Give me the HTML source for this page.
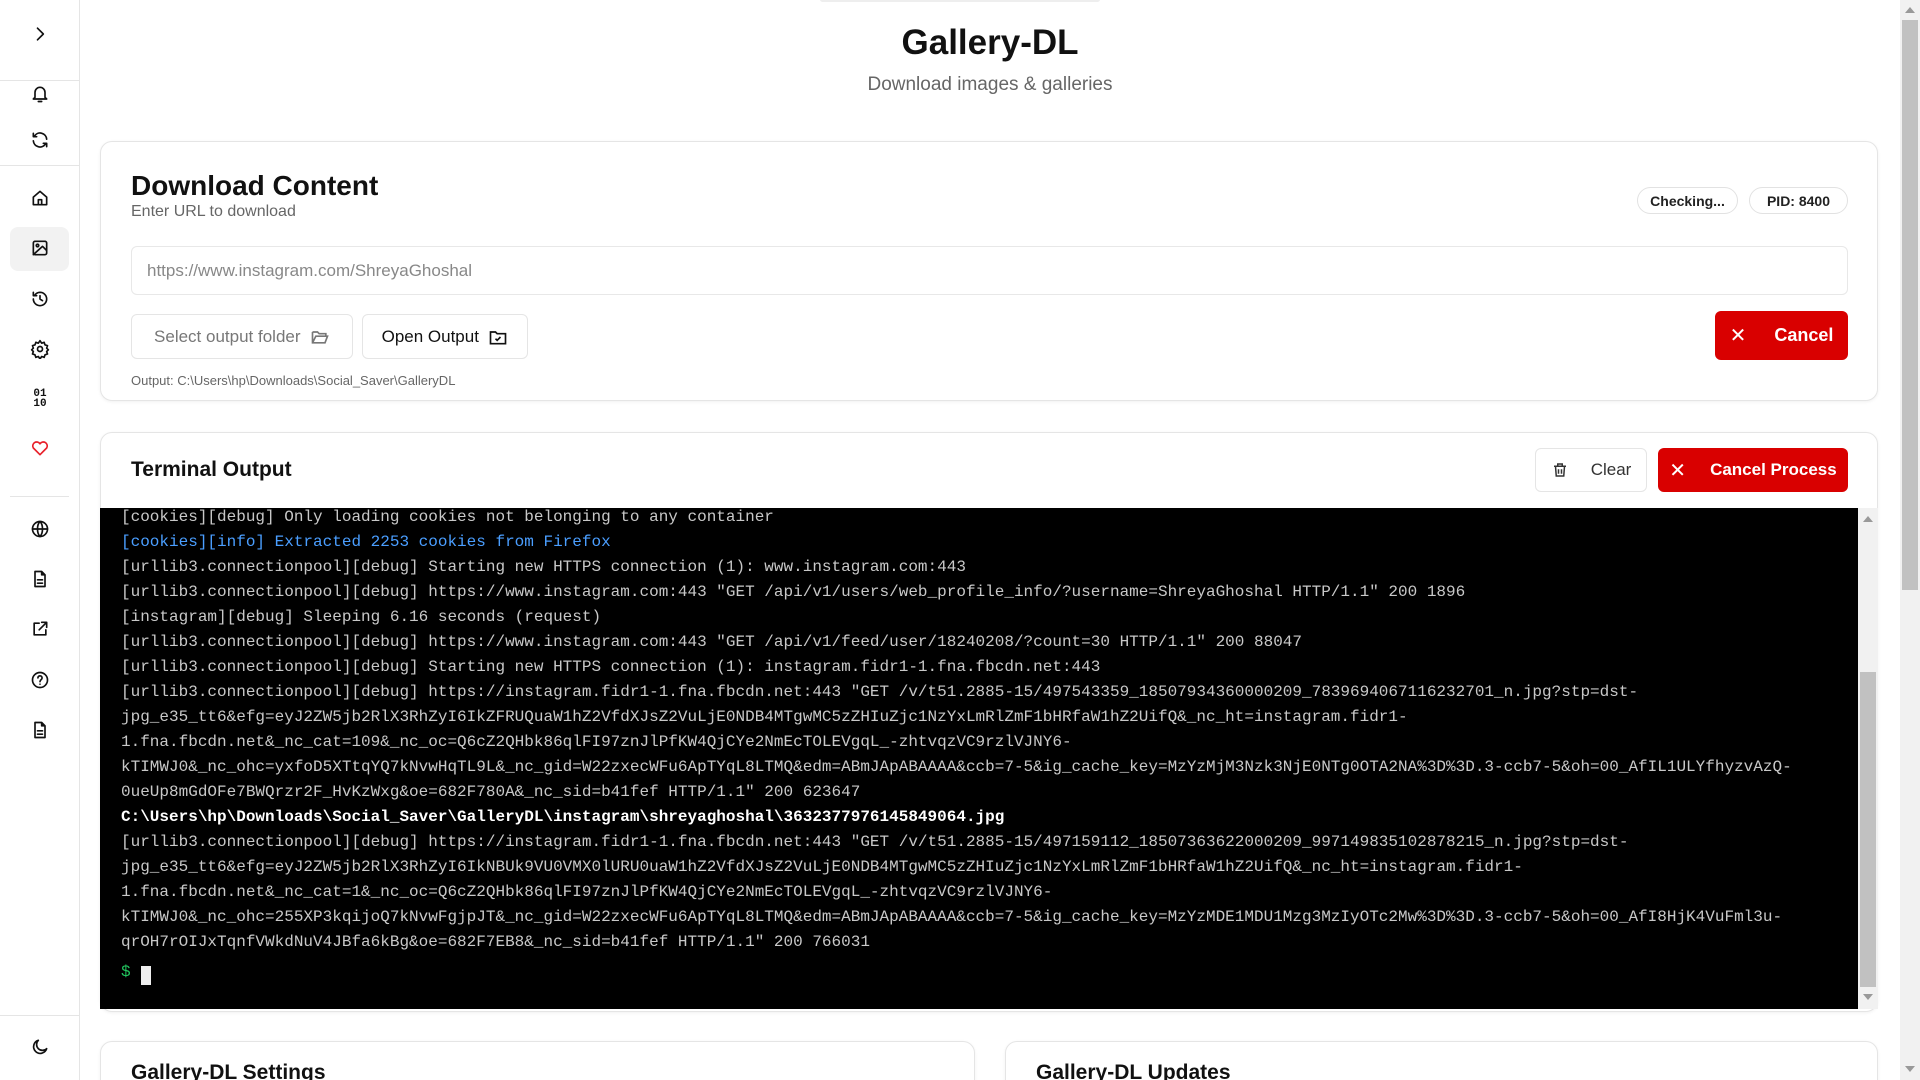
<!DOCTYPE html>
<html><head><meta charset="utf-8">
<style>
*{box-sizing:border-box;margin:0;padding:0}
html{width:1920px;height:1080px;overflow:hidden}
body{width:1920px;height:1080px;overflow:hidden;background:#fff;font-family:"Liberation Sans",sans-serif;color:#111;position:relative}
.a{position:absolute}
.side{left:0;top:0;width:80px;height:1080px;border-right:1px solid #e5e5e5;background:#fff}
.hr{position:absolute;left:0;width:80px;height:1px;background:#e5e5e5}
.ic{position:absolute;left:30px;width:20px;height:20px}
.ic svg{width:20px;height:20px;fill:none;stroke:#111;stroke-width:2;stroke-linecap:round;stroke-linejoin:round}
.card{border:1px solid #e5e5e5;border-radius:12px;background:#fff;box-shadow:0 1px 3px rgba(0,0,0,.06)}
.badge{border:1px solid #e2e2e2;border-radius:14px;height:27px;font-size:14px;font-weight:bold;display:flex;align-items:center;justify-content:center;color:#222}
.btn{border:1px solid #e5e5e5;border-radius:6px;display:flex;align-items:center;justify-content:center;font-size:17px}
.red{background:#d90000;color:#fff;border:none;font-weight:bold}
.term{left:100px;top:508px;width:1758px;height:501px;background:#000;font-family:"Liberation Mono",monospace;font-size:16px;line-height:25px;color:#c8c8c8;padding:0 0 0 21px;overflow:hidden;white-space:pre}
.b{color:#4a9eff}.w{color:#fff;font-weight:bold}
</style></head><body>
<div class="a side">
 <div class="ic" style="top:24px"><svg viewBox="0 0 24 24"><path d="M9 5l7 7-7 7"/></svg></div>
 <div class="hr" style="top:80px"></div>
 <div class="ic" style="top:84px"><svg viewBox="0 0 24 24"><path d="M6 16V10a6 6 0 0112 0v6l2 2H4zM10 21h4"/></svg></div>
 <div class="ic" style="top:130px"><svg viewBox="0 0 24 24"><path d="M20 11a8 8 0 00-14.5-4M4 4v4h4M4 13a8 8 0 0014.5 4M20 20v-4h-4"/></svg></div>
 <div class="hr" style="top:165px"></div>
 <div class="ic" style="top:188px"><svg viewBox="0 0 24 24"><path d="M4 11l8-7 8 7v9H4zM10 20v-6h4v6"/></svg></div>
 <div class="a" style="left:10px;top:227px;width:59px;height:44px;background:#f2f2f2;border-radius:8px"></div>
 <div class="ic" style="top:238px"><svg viewBox="0 0 24 24"><rect x="4" y="4" width="16" height="16" rx="2"/><circle cx="9" cy="9" r="1.5"/><path d="M20 15l-5-5-11 10"/></svg></div>
 <div class="ic" style="top:289px"><svg viewBox="0 0 24 24"><path d="M4 12a8 8 0 108-8 8 8 0 00-6 3M4 4v4h4M12 8v4l3 2"/></svg></div>
 <div class="ic" style="top:339px"><svg viewBox="0 0 24 24"><circle cx="12" cy="12" r="3"/><path d="M12 2l2 3 3-1 1 3 3 1-1 3 2 2-2 2 1 3-3 1-1 3-3-1-2 3-2-3-3 1-1-3-3-1 1-3-2-2 2-2-1-3 3-1 1-3 3 1z"/></svg></div>
 <div class="a" style="left:30px;top:389px;width:20px;font:bold 11px/10px 'Liberation Mono',monospace;text-align:center">01<br>10</div>
 <div class="ic" style="top:438px"><svg viewBox="0 0 24 24" style="stroke:#e8202a"><path d="M12 20l-8-8a4.5 4.5 0 018-5 4.5 4.5 0 018 5z"/></svg></div>
 <div class="hr" style="top:496px;left:10px;width:59px"></div>
 <div class="ic" style="top:519px"><svg viewBox="0 0 24 24"><circle cx="12" cy="12" r="9"/><path d="M3 12h18M12 3c4 4 4 14 0 18M12 3c-4 4-4 14 0 18"/></svg></div>
 <div class="ic" style="top:569px"><svg viewBox="0 0 24 24"><path d="M6 3h8l4 4v14H6zM14 3v4h4M9 13h6M9 17h6"/></svg></div>
 <div class="ic" style="top:619px"><svg viewBox="0 0 24 24"><path d="M11 5H5v14h14v-6M14 4h6v6M20 4l-9 9"/></svg></div>
 <div class="ic" style="top:670px"><svg viewBox="0 0 24 24"><circle cx="12" cy="12" r="9"/><path d="M9.5 9.5a2.5 2.5 0 114 2c-1 .7-1.5 1.2-1.5 2.5M12 17h.01"/></svg></div>
 <div class="ic" style="top:720px"><svg viewBox="0 0 24 24"><path d="M6 3h8l4 4v14H6zM14 3v4h4M9 13h6M9 17h6"/></svg></div>
 <div class="hr" style="top:1015px"></div>
 <div class="ic" style="top:1037px"><svg viewBox="0 0 24 24"><path d="M20 14A8 8 0 1110 4a6 6 0 0010 10z"/></svg></div>
</div>
<div class="a" style="left:820px;top:-3px;width:280px;height:5px;background:#eee;border-radius:3px"></div>
<div class="a" style="left:80px;width:1820px;top:23px;text-align:center;font-size:35px;font-weight:bold">Gallery-DL</div>
<div class="a" style="left:80px;width:1820px;top:74px;text-align:center;font-size:19px;color:#666">Download images &amp; galleries</div>

<div class="a card" style="left:100px;top:141px;width:1778px;height:260px"></div>
<div class="a" style="left:131px;top:170px;font-size:28px;font-weight:bold">Download Content</div>
<div class="a" style="left:131px;top:203px;font-size:16px;color:#666">Enter URL to download</div>
<div class="a badge" style="left:1637px;top:187px;width:101px">Checking...</div>
<div class="a badge" style="left:1749px;top:187px;width:99px">PID: 8400</div>
<div class="a" style="left:131px;top:246px;width:1717px;height:49px;border:1px solid #e8e8e8;border-radius:6px;font-size:17px;color:#888;padding:14px 15px">https://www.instagram.com/ShreyaGhoshal</div>
<div class="a btn" style="left:131px;top:314px;width:222px;height:45px;color:#777">Select output folder&nbsp;&nbsp;<svg width="20" height="20" viewBox="0 0 24 24" fill="none" stroke="#777" stroke-width="2"><path d="M3 6h6l2 2h8v3M3 6v13h15l3-8H7l-4 8"/></svg></div>
<div class="a btn" style="left:362px;top:314px;width:166px;height:45px;color:#111">Open Output&nbsp;&nbsp;<svg width="20" height="20" viewBox="0 0 24 24" fill="none" stroke="#111" stroke-width="2"><path d="M3 6h6l2 2h10v12H3zM9 14l2 2 4-4"/></svg></div>
<div class="a btn red" style="left:1715px;top:311px;width:133px;height:49px;font-size:18px"><span style="font-weight:normal;font-size:20px;margin-right:28px">✕</span>Cancel</div>
<div class="a" style="left:131px;top:373px;font-size:13px;color:#666">Output: C:\Users\hp\Downloads\Social_Saver\GalleryDL</div>

<div class="a card" style="left:100px;top:432px;width:1778px;height:580px"></div>
<div class="a" style="left:131px;top:458px;font-size:21px;font-weight:bold">Terminal Output</div>
<div class="a btn" style="left:1535px;top:448px;width:112px;height:44px;color:#333"><svg width="18" height="18" viewBox="0 0 24 24" fill="none" stroke="#333" stroke-width="2" style="margin-right:22px"><path d="M4 7h16M9 7V4h6v3M6 7l1 13h10l1-13M10 11v6M14 11v6"/></svg>Clear</div>
<div class="a btn red" style="left:1658px;top:448px;width:190px;height:44px"><span style="font-weight:normal;font-size:20px;margin-right:24px">✕</span>Cancel Process</div>
<div class="a term" style="padding-top:0;line-height:25px"><div style="margin-top:-3px">[cookies][debug] Only loading cookies not belonging to any container
<span class="b">[cookies][info] Extracted 2253 cookies from Firefox</span>
[urllib3.connectionpool][debug] Starting new HTTPS connection (1): www.instagram.com:443
[urllib3.connectionpool][debug] https://www.instagram.com:443 "GET /api/v1/users/web_profile_info/?username=ShreyaGhoshal HTTP/1.1" 200 1896
[instagram][debug] Sleeping 6.16 seconds (request)
[urllib3.connectionpool][debug] https://www.instagram.com:443 "GET /api/v1/feed/user/18240208/?count=30 HTTP/1.1" 200 88047
[urllib3.connectionpool][debug] Starting new HTTPS connection (1): instagram.fidr1-1.fna.fbcdn.net:443
[urllib3.connectionpool][debug] https://instagram.fidr1-1.fna.fbcdn.net:443 "GET /v/t51.2885-15/497543359_18507934360000209_7839694067116232701_n.jpg?stp=dst-
jpg_e35_tt6&amp;efg=eyJ2ZW5jb2RlX3RhZyI6IkZFRUQuaW1hZ2VfdXJsZ2VuLjE0NDB4MTgwMC5zZHIuZjc1NzYxLmRlZmF1bHRfaW1hZ2UifQ&amp;_nc_ht=instagram.fidr1-
1.fna.fbcdn.net&amp;_nc_cat=109&amp;_nc_oc=Q6cZ2QHbk86qlFI97znJlPfKW4QjCYe2NmEcTOLEVgqL_-zhtvqzVC9rzlVJNY6-
kTIMWJ0&amp;_nc_ohc=yxfoD5XTtqYQ7kNvwHqTL9L&amp;_nc_gid=W22zxecWFu6ApTYqL8LTMQ&amp;edm=ABmJApABAAAA&amp;ccb=7-5&amp;ig_cache_key=MzYzMjM3Nzk3NjE0NTg0OTA2NA%3D%3D.3-ccb7-5&amp;oh=00_AfIL1ULYfhyzvAzQ-
0ueUp8mGdOFe7BWQrzr2F_HvKzWxg&amp;oe=682F780A&amp;_nc_sid=b41fef HTTP/1.1" 200 623647
<span class="w">C:\Users\hp\Downloads\Social_Saver\GalleryDL\instagram\shreyaghoshal\3632377976145849064.jpg</span>
[urllib3.connectionpool][debug] https://instagram.fidr1-1.fna.fbcdn.net:443 "GET /v/t51.2885-15/497159112_18507363622000209_997149835102878215_n.jpg?stp=dst-
jpg_e35_tt6&amp;efg=eyJ2ZW5jb2RlX3RhZyI6IkNBUk9VU0VMX0lURU0uaW1hZ2VfdXJsZ2VuLjE0NDB4MTgwMC5zZHIuZjc1NzYxLmRlZmF1bHRfaW1hZ2UifQ&amp;_nc_ht=instagram.fidr1-
1.fna.fbcdn.net&amp;_nc_cat=1&amp;_nc_oc=Q6cZ2QHbk86qlFI97znJlPfKW4QjCYe2NmEcTOLEVgqL_-zhtvqzVC9rzlVJNY6-
kTIMWJ0&amp;_nc_ohc=255XP3kqijoQ7kNvwFgjpJT&amp;_nc_gid=W22zxecWFu6ApTYqL8LTMQ&amp;edm=ABmJApABAAAA&amp;ccb=7-5&amp;ig_cache_key=MzYzMDE1MDU1Mzg3MzIyOTc2Mw%3D%3D.3-ccb7-5&amp;oh=00_AfI8HjK4VuFml3u-
qrOH7rOIJxTqnfVWkdNuV4JBfa6kBg&amp;oe=682F7EB8&amp;_nc_sid=b41fef HTTP/1.1" 200 766031
</div></div>
<div class="a" style="left:121px;top:963px;font:16px 'Liberation Mono',monospace;color:#22c55e">$</div>
<div class="a" style="left:141px;top:966px;width:10px;height:19px;background:#eee"></div>
<div class="a" style="left:1858px;top:508px;width:20px;height:501px;background:#f1f1f1"></div>
<div class="a" style="left:1860px;top:672px;width:16px;height:315px;background:#c1c1c1"></div>
<div class="a" style="left:1863px;top:516px;width:0;height:0;border-left:5px solid transparent;border-right:5px solid transparent;border-bottom:6px solid #999"></div>
<div class="a" style="left:1863px;top:994px;width:0;height:0;border-left:5px solid transparent;border-right:5px solid transparent;border-top:6px solid #999"></div>

<div class="a card" style="left:100px;top:1041px;width:875px;height:60px"></div>
<div class="a card" style="left:1005px;top:1041px;width:873px;height:60px"></div>
<div class="a" style="left:131px;top:1061px;font-size:21px;font-weight:bold">Gallery-DL Settings</div>
<div class="a" style="left:1036px;top:1061px;font-size:21px;font-weight:bold">Gallery-DL Updates</div>

<div class="a" style="left:1900px;top:0;width:20px;height:1080px;background:#f1f1f1"></div>
<div class="a" style="left:1902px;top:20px;width:16px;height:570px;background:#c1c1c1"></div>
<div class="a" style="left:1905px;top:7px;width:0;height:0;border-left:5px solid transparent;border-right:5px solid transparent;border-bottom:6px solid #999"></div>
<div class="a" style="left:1905px;top:1066px;width:0;height:0;border-left:5px solid transparent;border-right:5px solid transparent;border-top:6px solid #999"></div>
</body></html>
